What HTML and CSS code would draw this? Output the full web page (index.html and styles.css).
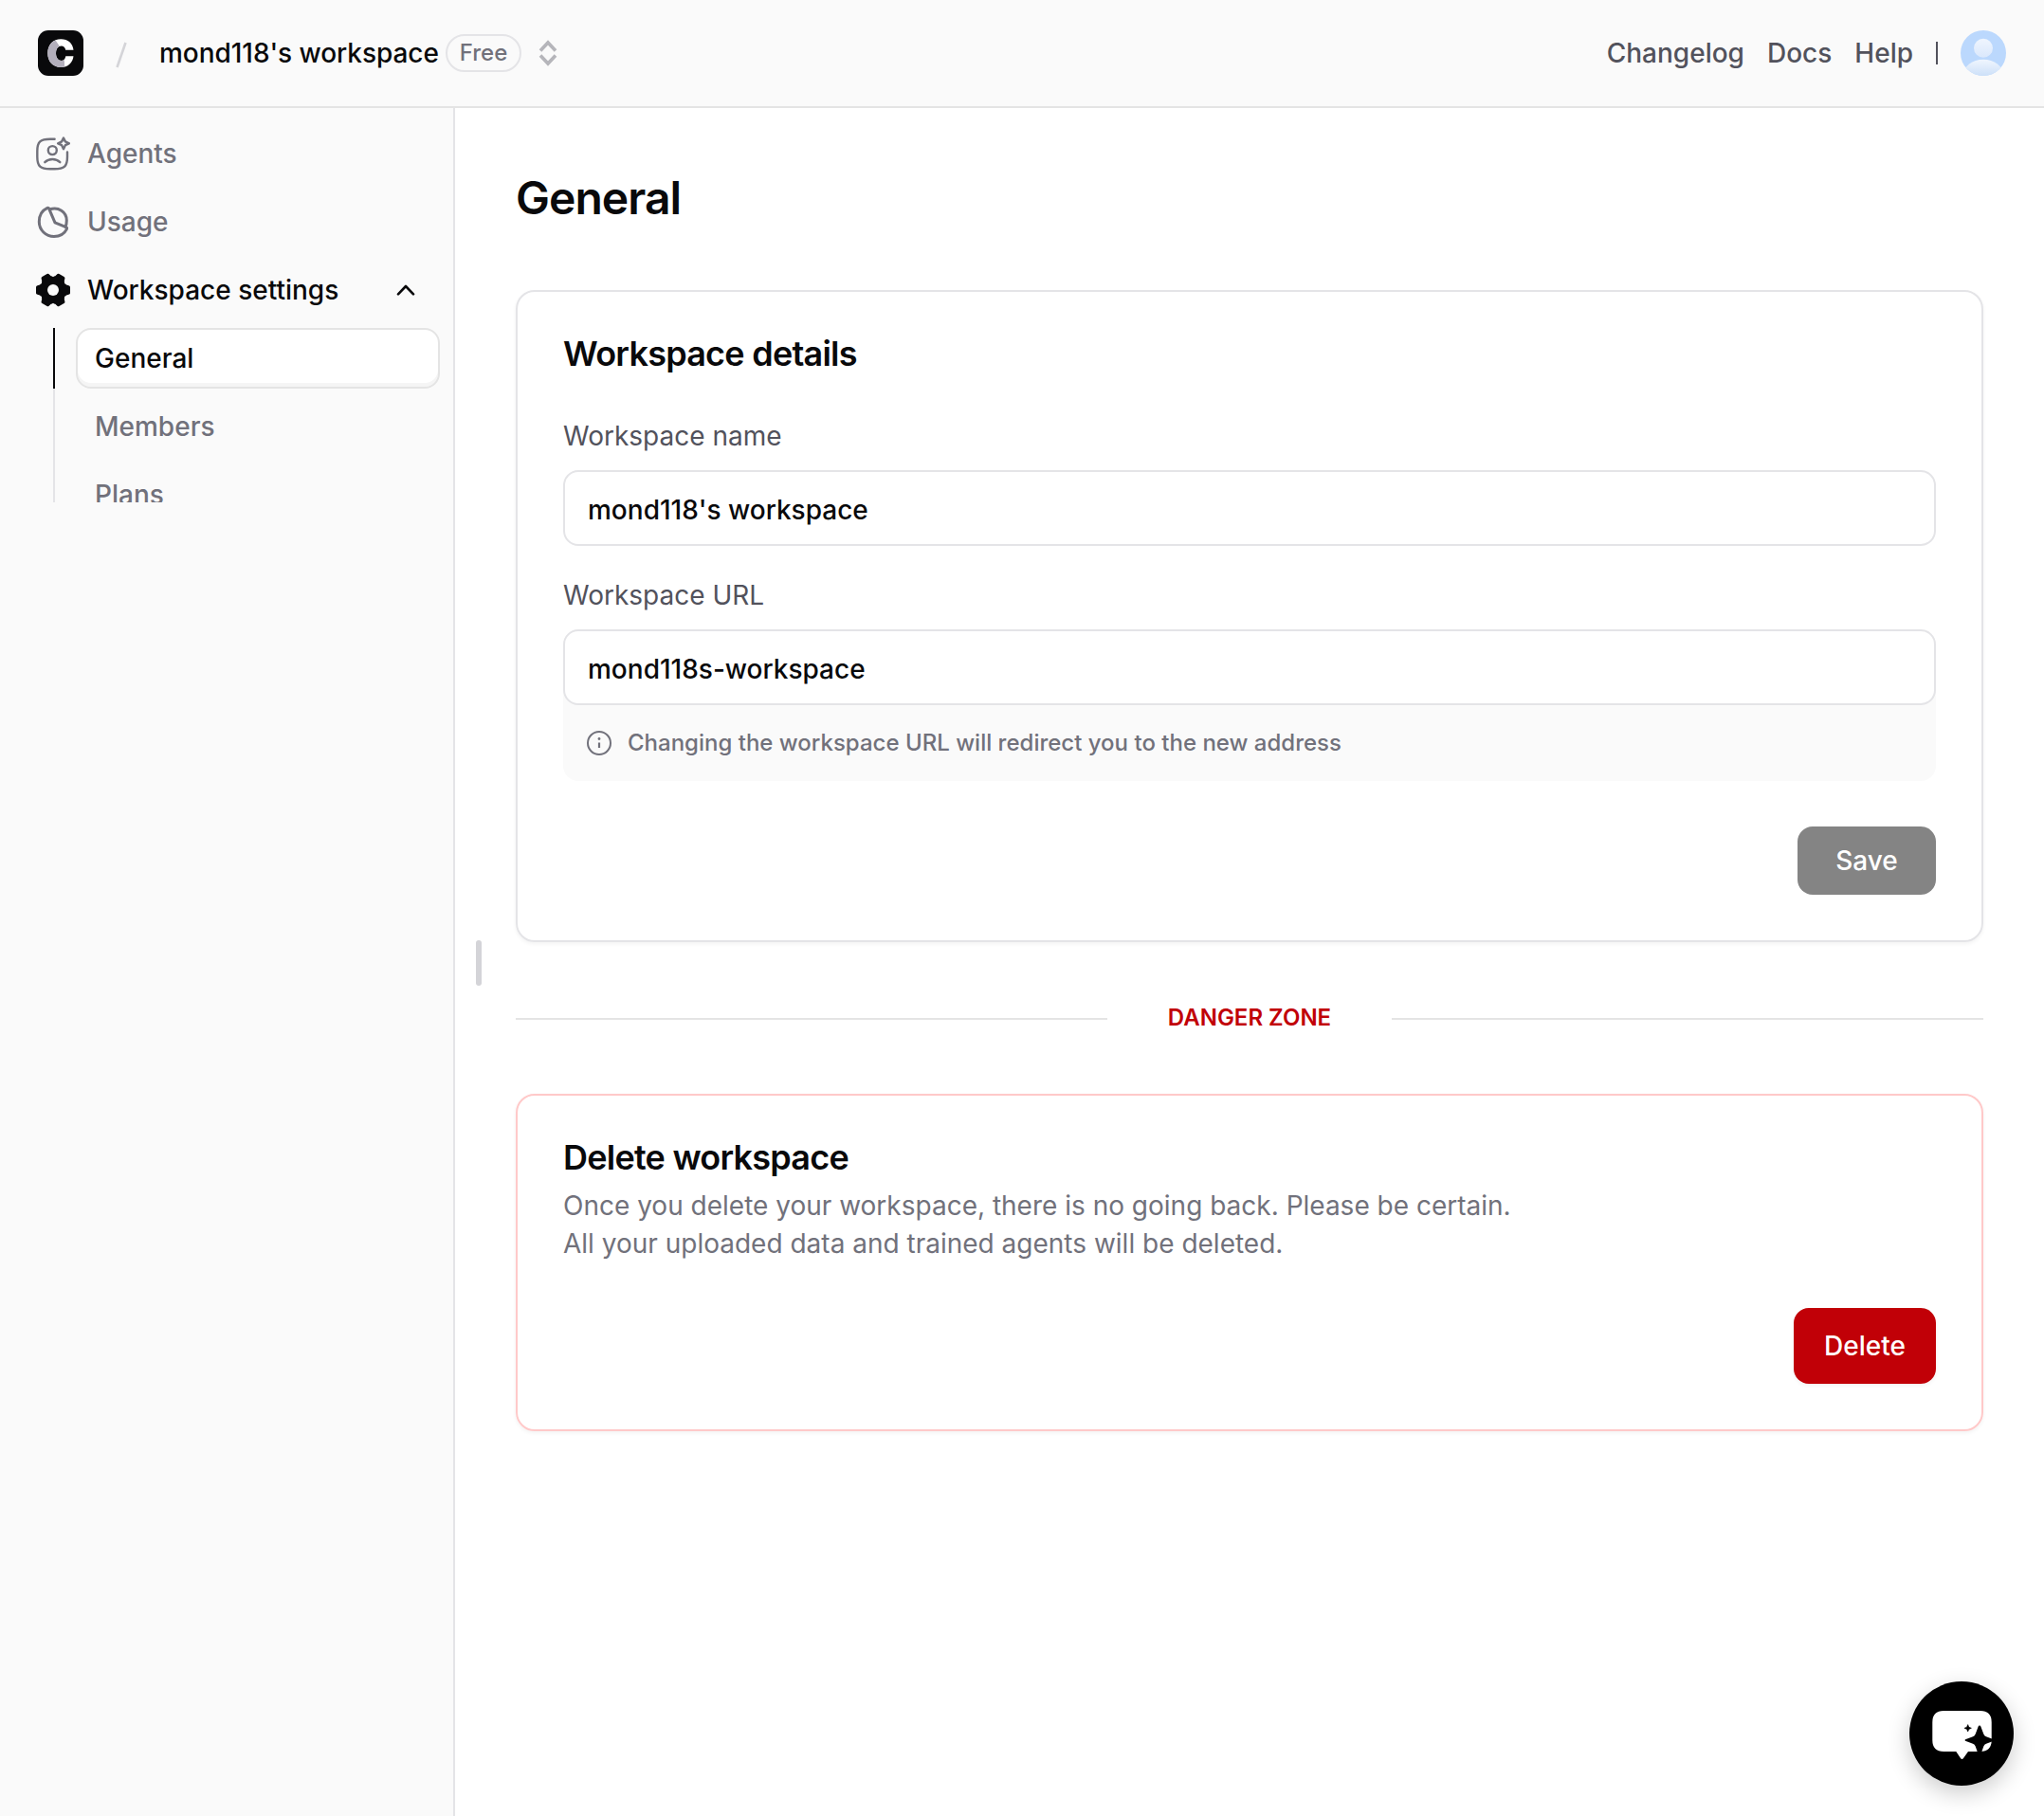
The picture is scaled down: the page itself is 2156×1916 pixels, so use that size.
FILE: index.html
```html
<!DOCTYPE html>
<html lang="en">
<head>
<meta charset="utf-8">
<title>Workspace settings</title>
<link rel="stylesheet" href="styles.css">
</head>
<body>
<header class="topbar">
  <div class="topbar-left">
    <svg class="logo" viewBox="0 0 48 48">
      <rect width="48" height="48" rx="11" fill="#09090b"/>
      <path d="M37.5 20.7H29.2C28.8 18 27.2 16.4 24.7 16.4C21.4 16.4 19 19.3 19 24.3C19 29 21.4 32 24.7 32C27.2 32 28.8 30.2 29.3 27.3H37.5C36.8 34.5 31.5 39 24.3 39C15.7 39 10.3 33 10.3 24.1C10.3 15.3 15.9 9.3 24.3 9.3C31.6 9.3 36.9 13.8 37.5 20.7Z" fill="#fff"/>
      <path d="M18.6 10.5L22.8 16.8C20.4 17.7 19 20.3 19 24.3C19 29 21.4 32 24.7 32C26 32 27 31.6 27.8 30.9L28.2 38.5C27 38.8 25.7 39 24.3 39C15.7 39 10.3 33 10.3 24.1C10.3 17.5 13.4 12.6 18.6 10.5Z" fill="#b3afbc"/>
    </svg>
    <svg class="slash" viewBox="0 0 12 28"><path d="M10.5 1L1.5 27" stroke="#d4d4d8" stroke-width="2.6" fill="none"/></svg>
    <div class="workspace">
      <span class="workspace-name">mond118's workspace</span>
      <span class="plan">Free</span>
    </div>
    <svg class="switcher" viewBox="0 0 20 28"><path d="M2 11.5L10 3L18 11.5M2 16.5L10 25L18 16.5" fill="none" stroke="#b5b5ba" stroke-width="3.6"/></svg>
  </div>
  <nav class="topbar-right">
    <a>Changelog</a>
    <a>Docs</a>
    <a>Help</a>
    <span class="bar"></span>
    <svg class="avatar" viewBox="0 0 48 48">
      <defs>
        <linearGradient id="skin" x1="0" y1="0" x2="0" y2="1"><stop offset="0" stop-color="#eff5fe"/><stop offset="1" stop-color="#dae8fc"/></linearGradient>
        <linearGradient id="body" x1="0" y1="0" x2="0" y2="1"><stop offset="0" stop-color="#f0f6fe"/><stop offset=".55" stop-color="#cbdff8"/></linearGradient>
        <clipPath id="round"><circle cx="24" cy="24" r="24"/></clipPath>
      </defs>
      <g clip-path="url(#round)">
        <rect width="48" height="48" fill="#bbd8fd"/>
        <circle cx="24" cy="18.8" r="10" fill="url(#skin)"/>
        <ellipse cx="24" cy="47" rx="21" ry="16.3" fill="url(#body)"/>
      </g>
    </svg>
  </nav>
</header>
<div class="shell">
  <aside class="sidebar">
    <nav class="menu">
      <a class="item">
        <svg class="icon" viewBox="0 0 36 36" fill="none" stroke="#71717b" stroke-width="2.4" stroke-linecap="round" stroke-linejoin="round">
          <path d="M19.6 2.8H15C4.500 2.800 1.300 5.500 1.300 15.500V21.500C1.300 31.500 4.500 34.300 15 34.300H19.500C30 34.300 33 31.500 33 21.500V16.500"/>
          <circle cx="17.300" cy="14.600" r="4.500"/>
          <path d="M9.300 27.200C13.500 23 21.200 23 25.300 27.200"/>
          <path d="M29 1.600L30.900 5.400L34.900 7.300L30.900 9.200L29 13.200L27.100 9.200L23.200 7.300L27.100 5.400Z"/>
        </svg>
        Agents
      </a>
      <a class="item">
        <svg class="icon" viewBox="0 0 36 36" fill="none" stroke="#71717b" stroke-width="3" stroke-linecap="round" stroke-linejoin="round">
          <path d="M14.100 5.200C13.900 3.500 12.900 3 11.600 3.600C6 6.200 3.300 11.600 3.300 18C3.300 26.600 10.200 33.500 19 33.500C25.300 33.500 30 30.500 32.300 25.900C33 24.500 32.500 23.800 31 23.300L20 18.800Z"/>
          <path d="M14.800 4.800C23.500 2 32.300 7.500 32.300 16.500C32.300 19 32 21.300 31 23.300"/>
        </svg>
        Usage
      </a>
      <a class="item active">
        <svg class="icon" viewBox="0 0 36 36">
          <g fill="#09090b">
            <circle cx="18" cy="18" r="14"/>
            <path id="cog" d="M5 11.500L4 12.500L.9 13.500Q0 14 0 15V21Q0 22 .9 22.500L4 23.500L5 24.500H31L32 23.500L35.100 22.500Q36 22 36 21V15Q36 14 35.100 13.500L32 12.500L31 11.500Z"/>
            <use href="#cog" transform="rotate(60 18 18)"/>
            <use href="#cog" transform="rotate(120 18 18)"/>
          </g>
          <circle cx="18" cy="18" r="6" fill="#fafafa"/>
        </svg>
        Workspace settings
        <svg class="caret" viewBox="0 0 20 12"><path d="M2 10.300L10 2L18 10.300" fill="none" stroke="#09090b" stroke-width="2.600" stroke-linecap="round" stroke-linejoin="round"/></svg>
      </a>
      <div class="submenu">
        <a class="sub current"><span>General</span></a>
        <a class="sub"><span>Members</span></a>
        <a class="sub"><span>Plans</span></a>
      </div>
    </nav>
  </aside>
  <div class="gutter"><span class="handle"></span></div>
  <main class="content">
    <h1 class="title">General</h1>
    <section class="card details">
      <h2 class="card-title">Workspace details</h2>
      <label class="label" for="name">Workspace name</label>
      <input class="input" id="name" value="mond118's workspace">
      <label class="label second" for="url">Workspace URL</label>
      <div class="url-field">
        <input class="input" id="url" value="mond118s-workspace">
        <div class="hint">
          <svg class="info" viewBox="0 0 28 28"><circle cx="14" cy="14" r="12" fill="none" stroke="#71717b" stroke-width="2"/><path d="M14 13.500V19" stroke="#71717b" stroke-width="2.200"/><circle cx="14" cy="9.500" r="1.400" fill="#71717b"/></svg>
          Changing the workspace URL will redirect you to the new address
        </div>
      </div>
      <button class="save">Save</button>
    </section>
    <div class="divider"><span class="danger-label">DANGER ZONE</span></div>
    <section class="card danger">
      <h2 class="card-title">Delete workspace</h2>
      <p class="copy">Once you delete your workspace, there is no going back. Please be certain.<br>All your uploaded data and trained agents will be deleted.</p>
      <button class="delete">Delete</button>
    </section>
  </main>
</div>
<button class="chat" aria-label="Chat">
  <svg viewBox="0 0 110 110">
    <path d="M36.300 31H74.700Q86.700 31 86.700 43V62Q86.700 74 74.700 74H62L57 81Q55.500 82.800 54 81L49.300 74H36.300Q24.300 74 24.300 62V43Q24.300 31 36.300 31Z" fill="#fff"/>
    <path d="M74 46.500Q75 46.500 75.300 47.500L78.300 55.500Q79 57.500 81 58.200L89 61.200V62.800L81 65.800Q79 66.500 78.300 68.500L75.300 77H72.700L69.700 68.500Q69 66.500 67 65.800L59 62.800Q58 62 59 61.200L67 58.200Q69 57.500 69.700 55.500L72.700 47.500Q73 46.500 74 46.500Z"/>
    <path d="M61.700 45.600L62.800 48.200L65.400 49.300L62.800 50.400L61.700 53L60.600 50.400L58 49.300L60.600 48.200Z" stroke="#000" stroke-width=".6"/>
  </svg>
</button>
</body>
</html>
```
FILE: styles.css
```css
* { box-sizing: border-box; }

body {
  margin: 0;
  height: 1916px;
  overflow: hidden;
  display: flex;
  flex-direction: column;
  background: #fff;
  color: #09090b;
  font: 500 28px/40px Inter, "Liberation Sans", sans-serif;
}

h1, h2, p { margin: 0; }
svg { display: block; flex: none; }
button, input { font: inherit; }

.topbar {
  flex: none;
  height: 114px;
  padding: 0 40px;
  display: flex;
  justify-content: space-between;
  align-items: center;
  background: #fafafa;
  border-bottom: 2px solid #e4e4e4;
}

.topbar-left, .topbar-right, .workspace { display: flex; align-items: center; }
.logo, .avatar { width: 48px; height: 48px; }
.slash { width: 12px; height: 28px; margin: 4px 34px 0; }
.workspace { gap: 8px; }
.workspace-name { width: 294px; white-space: nowrap; letter-spacing: -.05px; }
.plan {
  width: 80px;
  height: 40px;
  border: 2px solid #e4e4e7;
  border-radius: 20px;
  color: #71717b;
  font-size: 24px;
  line-height: 36px;
  text-align: center;
}
.switcher { width: 20px; height: 28px; margin-left: 18px; }

.topbar-right { gap: 24px; color: #52525c; }
.bar { width: 2px; height: 24px; background: #52525c; }

.shell { flex: 1; display: flex; min-height: 0; }

.sidebar {
  flex: none;
  width: 480px;
  background: #fafafa;
  border-right: 2px solid #e4e4e7;
}
.menu { height: 416px; padding-top: 12px; overflow: hidden; color: #71717b; }
.item { height: 72px; padding: 0 40px 0 38px; display: flex; align-items: center; gap: 18px; }
.icon { width: 36px; height: 36px; }
.active { color: #09090b; }
.caret { width: 20px; height: 12px; margin-left: auto; }
.submenu { margin: 4px 14px 0 56px; }
.sub { display: flex; height: 72px; padding-left: 22px; border-left: 2px solid #e4e4e7; }
.sub span { flex: 1; height: 64px; padding-left: 18px; border: 2px solid transparent; line-height: 60px; }
.current { height: 64px; border-color: #09090b; color: #09090b; }
.current span {
  border-color: #e4e4e4;
  border-radius: 16px;
  background: #fff;
  box-shadow: inset 0 -4px 0 #f5f5f5;
}
.current + .sub { height: 80px; padding-top: 8px; }

.gutter { flex: none; width: 64px; padding: 878px 0 0 22px; }
.handle { display: block; width: 6px; height: 48px; border-radius: 3px; background: #d4d4d8; }

.content { flex: 1; padding: 63px 64px 0 0; }
.title { font-size: 48px; font-weight: 600; line-height: 64px; letter-spacing: -.96px; }

.card {
  display: flex;
  flex-direction: column;
  padding: 0 48px 48px;
  border: 2px solid #e4e4e7;
  border-radius: 20px;
  box-shadow: 0 2px 4px rgba(0, 0, 0, .05);
}
.details { height: 688px; margin-top: 65px; padding-top: 43px; }
.card-title { font-size: 36px; font-weight: 600; line-height: 44px; letter-spacing: -.76px; }
.label { margin-top: 45px; color: #52525c; font-weight: 400; }
.second { margin-top: 32px; }
.input {
  display: block;
  width: 100%;
  height: 80px;
  padding: 4px 24px 0 24px;
  border: 2px solid #e4e4e7;
  border-radius: 16px;
  background: #fff;
  color: #09090b;
  outline: 0;
}
.label + .input, .label + .url-field { margin-top: 16px; }
.url-field { border-radius: 16px; background: #fafafa; }
.hint {
  height: 80px;
  padding-left: 24px;
  display: flex;
  align-items: center;
  gap: 16px;
  color: #71717b;
  font-size: 24px;
}
.info { width: 28px; height: 28px; }

.save, .delete {
  align-self: flex-end;
  border: 0;
  border-radius: 16px;
  color: #fff;
}
.save { width: 146px; height: 72px; margin-top: 48px; background: #848484; }
.delete { width: 150px; height: 80px; margin-top: 48px; background: #c10007; box-shadow: 0 2px 4px rgba(0, 0, 0, .05); }

.divider { height: 40px; margin-top: 60px; display: flex; align-items: center; }
.divider::before, .divider::after { content: ""; flex: 1; height: 2px; margin-top: 2px; background: #e4e4e4; }
.danger-label { width: 300px; color: #c10007; font-size: 24px; font-weight: 600; text-align: center; }

.danger { height: 356px; margin-top: 60px; padding-top: 43px; border-color: #ffc9c9; }
.copy { margin-top: 9px; color: #71717b; font-weight: 400; }

/* Floating chat launcher */
.chat {
  position: absolute;
  right: 32px;
  bottom: 32px;
  width: 110px;
  height: 110px;
  padding: 0;
  border: 0;
  border-radius: 50%;
  background: #000;
  box-shadow: 0 8px 24px rgba(0, 0, 0, .2);
}
```
